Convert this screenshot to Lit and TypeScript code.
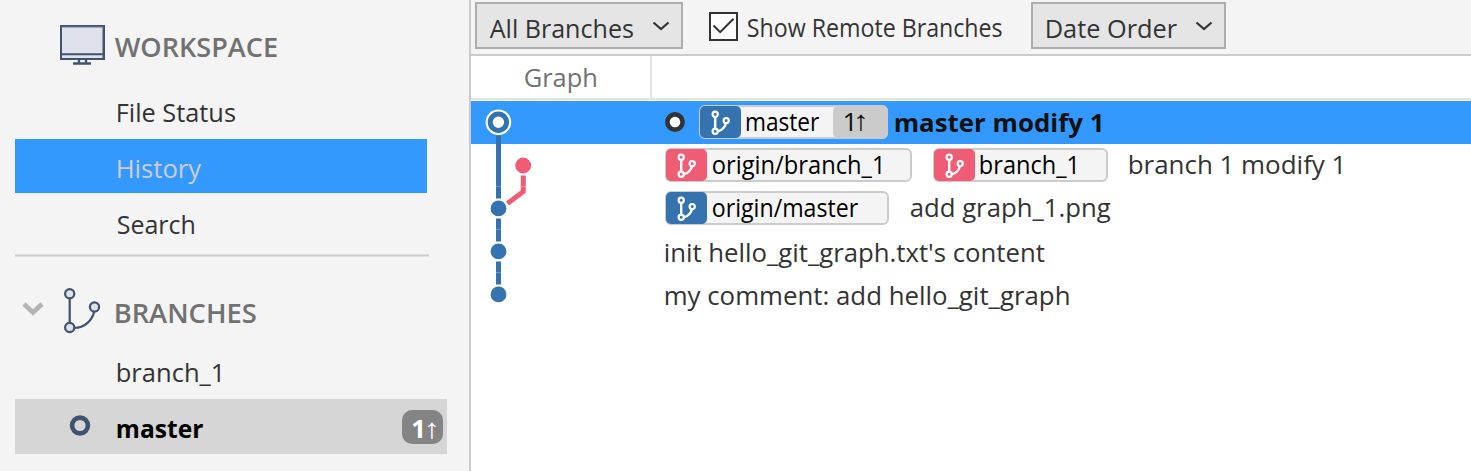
import { LitElement, html, css, svg, nothing } from "lit";
import { customElement, property, state } from "lit/decorators.js";

const FAMILY = '"Open Sans", "Noto Sans", sans-serif';

/* Text label whose glyphs span exactly `ink` pixels horizontally. */
@customElement("fit-label")
class FitLabel extends LitElement {
  @property() text = "";
  @property({ type: Number }) ink = 100;
  @property({ type: Number }) size = 25.7;
  @property({ type: Number }) weight = 400;

  static styles = css`
    :host { display: block; flex: none; height: 36px; }
    .t {
      display: block; width: max-content; line-height: 36px; white-space: pre;
      font-family: "Open Sans", "Noto Sans", sans-serif; transform-origin: 0 0;
    }
  `;

  render() {
    const ctx = document.createElement("canvas").getContext("2d")!;
    ctx.font = `${this.weight} ${this.size}px ${FAMILY}`;
    const m = ctx.measureText(this.text);
    const natural = m.actualBoundingBoxRight + m.actualBoundingBoxLeft;
    const k = this.ink / natural;
    const shift = m.actualBoundingBoxLeft * k + 0.7;
    this.style.width = `${this.ink}px`;
    return html`<span class="t" style="font-size:${this.size}px;font-weight:${this.weight};transform:translateX(${shift}px) scaleX(${k})">${this.text}</span>`;
  }
}

interface Tag { name: string; ink: number; width: number; color: string; ahead?: boolean }
interface Commit { tags: Tag[]; message: string; ink: number; current?: boolean; plain?: boolean }

const BLUE = "#3572b0";
const PINK = "#f15c75";

@customElement("app-root")
class AppRoot extends LitElement {
  @state() commits: Commit[] = [
    { current: true, message: "master modify 1", ink: 205, tags: [{ name: "master", ink: 73, width: 189, color: BLUE, ahead: true }] },
    { message: "branch 1 modify 1", ink: 212, tags: [
      { name: "origin/branch_1", ink: 168.5, width: 247, color: PINK },
      { name: "branch_1", ink: 95, width: 175, color: PINK } ] },
    { message: "add graph_1.png", ink: 200, tags: [{ name: "origin/master", ink: 146, width: 224, color: BLUE }] },
    { message: "init hello_git_graph.txt's content", ink: 379, tags: [], plain: true },
    { message: "my comment: add hello_git_graph", ink: 403, tags: [], plain: true },
  ];

  static styles = css`
    :host {
      display: flex; width: 1471px; height: 471px; overflow: hidden;
      background: #fff; color: #333; box-sizing: border-box;
    }
    * { box-sizing: border-box; }
    svg { display: block; flex: none; }
    .side { width: 471px; flex: none; background: #f4f4f4; border-right: 2px solid #cbcbcb; padding-left: 15px; }
    .head { display: flex; align-items: flex-start; color: #717171; }
    .head.ws { height: 83px; padding-left: 45px; }
    .head.ws svg { margin-top: 24px; }
    .head.ws fit-label { margin: 29px 0 0 7.5px; }
    .head.br { height: 86px; padding-left: 7px; }
    .head.br .chev { margin-top: 45px; }
    .head.br .fork { margin: 30px 0 0 19px; }
    .head.br fit-label { margin: 38px 0 0 12.5px; }
    .item { height: 53.5px; margin-bottom: 2.5px; padding: 12px 0 0 102px; width: 412px; }
    .item.sel { background: #3399ff; color: #ccc; }
    .item.cur { display: flex; height: 55.4px; width: 431.5px; background: #d6d6d6; color: #000; padding-left: 54px; }
    .item.cur svg { margin: 4px 26px 0 0; }
    .rule { height: 2px; width: 414px; background: #cbcbcb; margin-top: 4px; margin-bottom: 2px; transform: translateY(1.5px); }
    .count {
      display: flex; width: 41px; height: 34px; border-radius: 10px; background: #848484;
      color: #fff; margin: -1px 0 0 198.5px; padding-left: 10px;
    }
    .count fit-label { margin-top: 1px; }
    .count fit-label + fit-label { margin: -1px 0 0 5px; }
    .main { flex: 1; display: flex; flex-direction: column; }
    .bar { height: 56px; display: flex; align-items: flex-start; background: #f4f4f4; border-bottom: 2px solid #cbcbcb; padding: 2px 0 0 4px; }
    .select { display: flex; height: 47px; border: 2px solid #adadad; background: #e5e5e5; padding: 7px 11px 0 12px; justify-content: space-between; }
    .select svg { margin-top: 10px; }
    .select.a { width: 208px; }
    .select.b { width: 195px; margin-left: 29.5px; padding-left: 13px; }
    .box { margin: 10px 9px 0 26px; }
    .bar > fit-label { margin-top: 7px; }
    .cols { display: flex; height: 44px; border-bottom: 2px solid #e4e4e4; color: #717171; margin-bottom: 1px; }
    .col { width: 181px; border-right: 2px solid #e4e4e4; padding: 4px 0 0 53px; }
    .body { display: grid; }
    .rows, .graph { grid-area: 1 / 1; }
    .row { height: 43px; display: flex; align-items: flex-start; gap: 21px; padding-left: 194px; }
    .row > fit-label { margin-top: 3px; }
    .row.current { background: #3399ff; color: #111; gap: 6.5px; padding-left: 194px; }
    .row.current > fit-label { margin-top: 4px; }
    .row.plain > fit-label { margin-top: 5px; }
    .ring { margin: 11px 7.5px 0 0; }
    .tag { display: flex; height: 34px; margin-top: 4px; border: 2px solid #cbcbcb; border-radius: 6px; background: #f4f4f4; color: #000; }
    .tag > svg { margin: -1px 0 0 -1px; }
    .tag > fit-label { margin: -3px 0 0 5px; }
    .ahead { display: flex; flex: 1; margin: -2px -2px -2px 14px; border-radius: 6px; background: #cbcbcb; padding: 0 0 0 10.5px; color: #111; }
    .ahead fit-label { margin-top: -2px; }
    .ahead fit-label + fit-label { margin: -4px 0 0 4.5px; }
  `;

  label(text: string, ink: number, weight = 400, size = 25.7) {
    return html`<fit-label .text=${text} .ink=${ink} .weight=${weight} .size=${size}></fit-label>`;
  }

  arrow() {
    return svg`<path d="M1.5 1.5 L9 8 L16.5 1.5" fill="none" stroke="#333" stroke-width="2.2"/>`;
  }

  tag(t: Tag) {
    return html`<div class="tag" style="width:${t.width}px">
      <svg width="41" height="32" viewBox="0 0 41 32">
        <rect width="41" height="32" rx="5" fill=${t.color} />
        <g fill="none" stroke="#fff">
          <path d="M15.2 11 V22.5 M17.8 25.2 C22.5 24.5 25.5 20 25.8 17.3" stroke-width="2.4" />
          <g stroke-width="2.2"><circle cx="15.2" cy="8.3" r="2.6" /><circle cx="15.2" cy="25.2" r="2.6" /><circle cx="26.2" cy="14.6" r="2.6" /></g>
        </g>
      </svg>
      ${this.label(t.name, t.ink)}
      ${t.ahead ? html`<div class="ahead">${this.label("1", 7.5, 400, 25)}${this.label("↑", 9, 400, 28)}</div>` : nothing}
    </div>`;
  }

  row(c: Commit) {
    return html`<div class="row ${c.current ? "current" : ""} ${c.plain ? "plain" : ""}">
      ${c.current
        ? html`<svg class="ring" width="20" height="20"><circle cx="10" cy="10" r="7.6" fill="#fff" stroke="#333" stroke-width="4.6" /></svg>`
        : nothing}
      ${c.tags.map((t) => this.tag(t))}
      ${this.label(c.message, c.ink, c.current ? 700 : 400)}
    </div>`;
  }

  render() {
    return html`
      <nav class="side">
        <div class="head ws">
          <svg width="46" height="42" viewBox="0 0 46 42">
            <rect x="1" y="2" width="43" height="33" fill="#dfe2eb" stroke="#42526e" stroke-width="2" />
            <path d="M2 3.2 H43 M42.6 3 V34" stroke="#8993a4" stroke-width="1" />
            <path d="M1 30.2 H44 M1 35 H45" stroke="#42526e" stroke-width="2" />
            <path d="M19 36 V39 M26 36 V39 M13 39.5 H31" stroke="#42526e" stroke-width="2.4" />
          </svg>
          ${this.label("WORKSPACE", 162.5, 600, 26.5)}
        </div>
        <div class="item">${this.label("File Status", 118)}</div>
        <div class="item sel">${this.label("History", 83.5)}</div>
        <div class="item">${this.label("Search", 76.5)}</div>
        <div class="rule"></div>
        <div class="head br">
          <svg class="chev" width="22" height="16" viewBox="0 0 22 16"><path d="M2 2 L11 10.5 L20 2" fill="none" stroke="#b3b3b3" stroke-width="4.6" /></svg>
          <svg class="fork" width="39" height="48" viewBox="0 0 39 48">
            <g fill="#dfe2eb" stroke="#42526e" stroke-width="2.2">
              <path d="M6.7 11 V36 M11 41 C22 41 29.5 33 31.3 24" fill="none" />
              <circle cx="6.7" cy="6.7" r="4.6" /><circle cx="6.7" cy="40.5" r="4.6" /><circle cx="31.5" cy="20" r="4.6" />
            </g>
          </svg>
          ${this.label("BRANCHES", 140.5, 600, 26.5)}
        </div>
        <div class="item">${this.label("branch_1", 103)}</div>
        <div class="item cur">
          <svg width="22" height="22"><circle cx="11" cy="10.5" r="7.9" fill="#d6d6d6" stroke="#42526e" stroke-width="4.6" /></svg>
          ${this.label("master", 86, 700)}
          <div class="count">${this.label("1", 10, 700)}${this.label("↑", 9, 400, 28)}</div>
        </div>
      </nav>
      <main class="main">
        <div class="bar">
          <div class="select a">${this.label("All Branches", 144)}<svg width="18" height="12">${this.arrow()}</svg></div>
          <svg class="box" width="29" height="29" viewBox="0 0 29 29">
            <rect x="1" y="1" width="27" height="27" fill="#fff" stroke="#333" stroke-width="2" />
            <path d="M4.5 13.5 L11.2 20.2 L24.5 6.8" fill="none" stroke="#333" stroke-width="2" />
          </svg>
          ${this.label("Show Remote Branches", 254, 400, 25.2)}
          <div class="select b">${this.label("Date Order", 131)}<svg width="18" height="12">${this.arrow()}</svg></div>
        </div>
        <div class="cols"><div class="col">${this.label("Graph", 71.5)}</div></div>
        <div class="body">
          <div class="rows">${this.commits.map((c) => this.row(c))}</div>
          <svg class="graph" width="180" height="215" viewBox="471 101 180 215">
            <g stroke=${BLUE} stroke-width="5">
              <path d="M498.5 135.5 V198.5 M498.5 218.5 V241.5 M498.5 261.5 V284.5" />
            </g>
            <path d="M523.3 175.5 V191.5 L507.5 203.5" fill="none" stroke=${PINK} stroke-width="5" />
            <path d="M496 186.5 H501 M521 186.5 H526 M496 229.5 H501 M496 272.5 H501" stroke="#fff" stroke-opacity=".3" />
            <circle cx="498.4" cy="122.3" r="12.8" fill="#fff" />
            <circle cx="498.4" cy="122.3" r="8.2" fill="#fff" stroke=${BLUE} stroke-width="5" />
            <circle cx="523.2" cy="165.5" r="7.9" fill=${PINK} />
            ${[208.4, 251.4, 294.4].map((y) => svg`<circle cx="498.5" cy=${y} r="7.9" fill=${BLUE} />`)}
          </svg>
        </div>
      </main>
    `;
  }
}
